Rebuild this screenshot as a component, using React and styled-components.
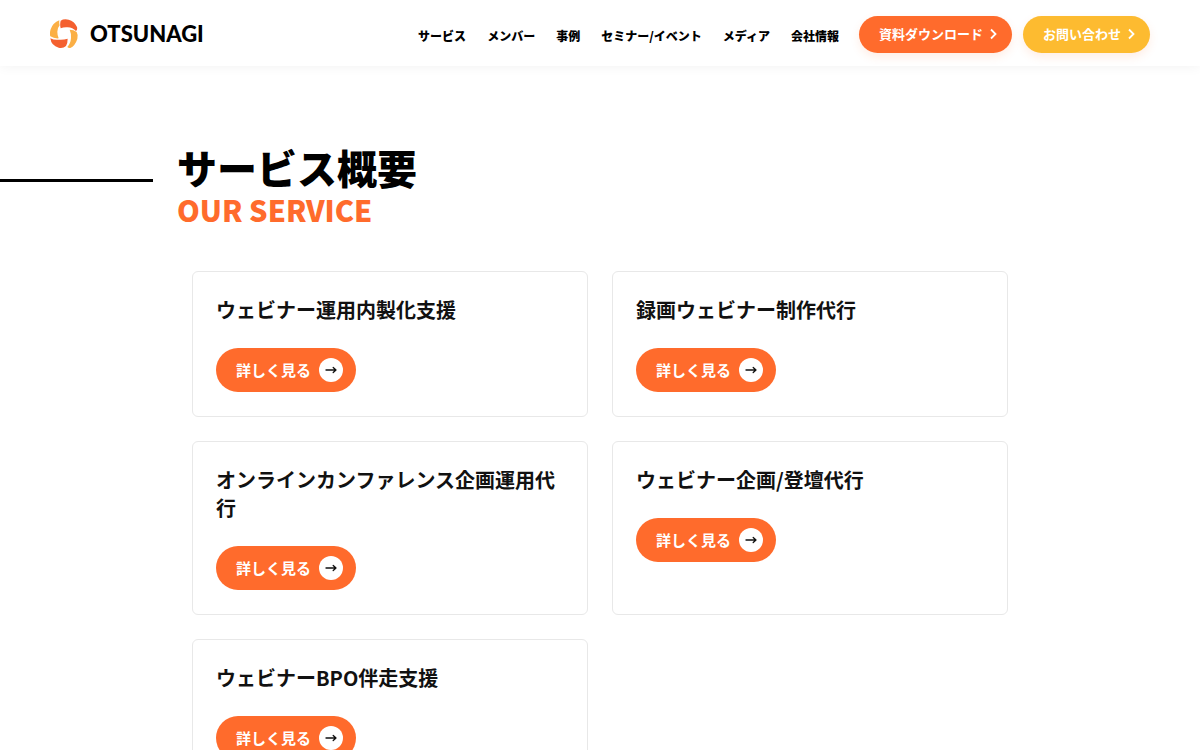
import React from "react";
import styled, { createGlobalStyle } from "styled-components";

const GlobalStyle = createGlobalStyle`
  * {
    box-sizing: border-box;
  }

  body {
    margin: 0;
    background: #fff;
    color: #000;
    font-family: "Noto Sans CJK JP", sans-serif;
  }
`;

const Header = styled.header`
  display: flex;
  align-items: center;
  justify-content: space-between;
  min-height: 66px;
  padding: 2px 50px 0;
  background: #fff;
  box-shadow: 0 0 12px rgba(0, 0, 0, 0.06);
`;

const Logo = styled.a`
  display: flex;
  align-items: center;
  gap: 10px;
  color: #000;
  font-family: Lato, sans-serif;
  font-size: 22px;
  font-weight: 900;
  line-height: 30px;
  text-decoration: none;
`;

const HeaderRight = styled.div`
  display: flex;
  align-items: center;
  gap: 20px;
`;

const Nav = styled.nav`
  display: flex;
  gap: 21px;
  padding-top: 4px;
`;

const NavLink = styled.a`
  color: #000;
  font-size: 12px;
  font-weight: 900;
  line-height: 18px;
  text-decoration: none;
  white-space: nowrap;
`;

const HeaderButtons = styled.div`
  display: flex;
  gap: 11px;
`;

const PillLink = styled.a`
  display: flex;
  align-items: center;
  gap: 6px;
  height: 37px;
  padding: 0 13px 0 20px;
  border-radius: 20px;
  background: ${({ $color }) => $color};
  box-shadow: 0 4px 10px rgba(255, 107, 44, 0.12);
  color: #fff;
  font-size: 13px;
  font-weight: 700;
  line-height: 18px;
  text-decoration: none;
  white-space: nowrap;
`;

const SectionHead = styled.div`
  display: grid;
  grid-template-columns: minmax(24px, 1fr) minmax(0, 846px) minmax(24px, 1fr);
  padding-top: 77px;
`;

const Line = styled.span`
  height: 3px;
  margin: 36px 24px 0 0;
  background: #000;
`;

const Title = styled.h2`
  margin: 0;
  font-size: 40px;
  font-weight: 900;
  line-height: 48px;
`;

const SubTitle = styled.p`
  margin: 0;
  color: #ff6b2c;
  font-size: 29px;
  font-weight: 900;
  line-height: 36px;
`;

const Cards = styled.div`
  display: grid;
  grid-template-columns: repeat(2, minmax(0, 1fr));
  gap: 24px;
  max-width: 816px;
  margin: 44px auto;
`;

const Card = styled.article`
  padding: 24px 23px;
  border: 1px solid #e8e8e8;
  border-radius: 6px;
`;

const CardTitle = styled.h3`
  margin: 0 0 24px;
  color: #111;
  font-size: 20px;
  font-weight: 700;
  line-height: 28px;
`;

const MoreLink = styled.a`
  display: inline-flex;
  align-items: center;
  gap: 8px;
  height: 44px;
  padding: 0 13px 0 20px;
  border-radius: 22px;
  background: #ff6b2c;
  color: #fff;
  font-size: 15px;
  font-weight: 700;
  line-height: 22px;
  text-decoration: none;
  vertical-align: top;
`;

const ArrowCircle = styled.span`
  display: flex;
  align-items: center;
  justify-content: center;
  width: 24px;
  height: 24px;
  border-radius: 50%;
  background: #fff;
`;

const LogoMark = () => (
  <svg width="30" height="30" viewBox="19 18 90 90" aria-hidden="true">
    <path d="M47 22 Q46 31 48 37 Q41 45 41 56 Q41 67 45 76 Q31 77 20 70 Q17 61 21 49 Q27 30 47 22Z" fill="#fbaf45" />
    <path d="M51 23 Q60 17 75 20 Q92 24 100 42 Q102 50 97 54 Q87 44 72 43 Q60 42 51 46 Q48 35 51 23Z" fill="#f4602f" />
    <path d="M78 50 Q90 50 99 57 Q104 65 101 78 Q94 99 80 105 Q74 106 71 102 Q81 91 82 75 Q83 61 78 50Z" fill="#fbaf45" />
    <path d="M20 76 Q32 82 46 80 Q59 81 72 77 Q72 91 67 99 Q58 107 45 104 Q23 99 20 76Z" fill="#f4602f" />
  </svg>
);

const Chevron = () => (
  <svg width="10" height="12" viewBox="0 0 10 12" fill="none" aria-hidden="true">
    <path d="M2 1.5l4.5 4.5L2 10.5" stroke="#fff" strokeWidth="1.8" />
  </svg>
);

const Arrow = () => (
  <svg width="12" height="10" viewBox="0 0 12 10" fill="none" aria-hidden="true">
    <path d="M1 5h10M8.2 2.4L11 5 8.2 7.6" stroke="#111" strokeWidth="1.3" strokeLinecap="round" strokeLinejoin="round" />
  </svg>
);

const navItems = ["サービス", "メンバー", "事例", "セミナー/イベント", "メディア", "会社情報"];

const services = [
  "ウェビナー運用内製化支援",
  "録画ウェビナー制作代行",
  "オンラインカンファレンス企画運用代行",
  "ウェビナー企画/登壇代行",
  "ウェビナーBPO伴走支援",
];

const ServiceCard = ({ title }) => (
  <Card>
    <CardTitle>{title}</CardTitle>
    <MoreLink href="#">
      詳しく見る
      <ArrowCircle>
        <Arrow />
      </ArrowCircle>
    </MoreLink>
  </Card>
);

const App = () => {
  return (
    <>
      <GlobalStyle />
      <Header>
        <Logo href="#">
          <LogoMark />
          OTSUNAGI
        </Logo>
        <HeaderRight>
          <Nav>
            {navItems.map((item) => (
              <NavLink key={item} href="#">{item}</NavLink>
            ))}
          </Nav>
          <HeaderButtons>
            <PillLink href="#" $color="#ff6b2c">資料ダウンロード<Chevron /></PillLink>
            <PillLink href="#" $color="#fdbb30">お問い合わせ<Chevron /></PillLink>
          </HeaderButtons>
        </HeaderRight>
      </Header>
      <main>
        <SectionHead>
          <Line />
          <div>
            <Title>サービス概要</Title>
            <SubTitle>OUR SERVICE</SubTitle>
          </div>
        </SectionHead>
        <Cards>
          {services.map((title) => (
            <ServiceCard key={title} title={title} />
          ))}
        </Cards>
      </main>
    </>
  );
};

export default App;
